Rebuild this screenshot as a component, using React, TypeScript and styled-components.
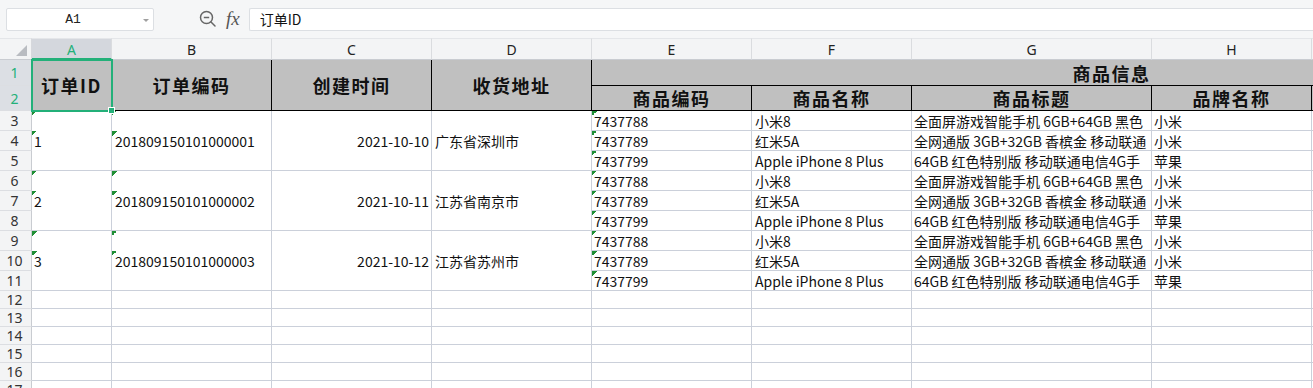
import React from 'react';
import styled, { createGlobalStyle, css } from 'styled-components';

const GREEN = '#23b079';
const GRID = '#cbd0da';
const MARK = '#1f8f35';
const CJK = '"Noto Sans CJK SC", "Noto Sans", sans-serif';

const GlobalStyle = createGlobalStyle`
  html, body { margin: 0; padding: 0; background: #fff; overflow: hidden; }
  body { font-family: ${CJK}; }
`;

const Page = styled.div`
  width: 1313px;
  height: 388px;
  overflow: hidden;
  background: #fff;
`;

const Toolbar = styled.div`
  height: 38px;
  box-sizing: border-box;
  display: flex;
  align-items: center;
  padding-left: 6px;
  background: #f5f6f7;
`;

const NameBox = styled.div`
  position: relative;
  width: 148px;
  height: 23px;
  box-sizing: border-box;
  border: 1px solid #dcdfe3;
  border-radius: 2px;
  background: #fff;
  display: flex;
  align-items: center;
  justify-content: center;
  padding-right: 14px;
  font: 13px "Liberation Mono", monospace;
  color: #222;
`;

const Caret = styled.span`
  position: absolute;
  right: 4px;
  top: 10px;
  width: 0;
  height: 0;
  border-top: 3px solid #a0a0a0;
  border-left: 3px solid transparent;
  border-right: 3px solid transparent;
`;

const IconSlot = styled.span`
  display: flex;
  align-items: center;
  margin-left: 45px;
  color: #666;
`;

const Fx = styled.span`
  margin-left: 9px;
  font: italic 19px "Liberation Serif", serif;
  color: #555;
  line-height: 1;
  padding-bottom: 2px;
`;

const Formula = styled.div`
  flex: 1;
  height: 23px;
  margin-left: 9px;
  box-sizing: border-box;
  border: 1px solid #dcdfe3;
  border-right: none;
  border-radius: 2px 0 0 2px;
  background: #fff;
  display: flex;
  align-items: center;
  padding-left: 10px;
  font-size: 14px;
  color: #111;
`;

const Sheet = styled.div`
  display: grid;
  grid-template-columns: 32px 80px repeat(5, 160px) 240px repeat(3, 160px);
  grid-template-rows: 22px 26px 25px repeat(9, 20px) repeat(6, 18px);
  width: max-content;
`;

type Place = { $c: number; $r: number; $cs?: number; $rs?: number };

const placed = css<Place>`
  grid-column: ${p => `${p.$c} / span ${p.$cs ?? 1}`};
  grid-row: ${p => `${p.$r} / span ${p.$rs ?? 1}`};
  box-sizing: border-box;
  min-width: 0;
`;

const Corner = styled.div`
  grid-column: 1;
  grid-row: 1;
  box-sizing: border-box;
  background: #f3f4f5;
  border-top: 1px solid #e4e6e9;
  border-right: 1px solid #d6d8dc;
  border-bottom: 1px solid #c9ccd1;
  display: flex;
  align-items: flex-end;
  justify-content: flex-end;
  padding: 0 4px 3px 0;
`;

const ColHead = styled.div<Place & { $active?: boolean }>`
  ${placed};
  background: ${p => (p.$active ? '#d4d7dd' : '#f3f4f5')};
  border-top: 1px solid #e4e6e9;
  border-right: 1px solid #dadcdf;
  border-bottom: ${p => (p.$active ? `2px solid ${GREEN}` : '1px solid #c9ccd1')};
  display: flex;
  align-items: center;
  justify-content: center;
  font: 14px "Noto Sans", sans-serif;
  color: ${p => (p.$active ? GREEN : '#222')};
  padding-top: 1px;
`;

const RowHead = styled.div<Place & { $active?: boolean }>`
  ${placed};
  background: ${p => (p.$active ? '#dcdfe4' : '#f3f4f5')};
  border-right: 1px solid #c9ccd1;
  border-bottom: 1px solid #dcdee2;
  display: flex;
  align-items: center;
  justify-content: center;
  padding-right: 2px;
  font: 14px "Noto Sans", sans-serif;
  color: ${p => (p.$active ? GREEN : '#333')};
`;

const HeadCell = styled.div<Place & { $selected?: boolean }>`
  ${placed};
  position: relative;
  background: #c0c0c0;
  border-right: 1px solid #000;
  border-bottom: 1px solid #000;
  display: flex;
  align-items: center;
  justify-content: center;
  font-family: ${CJK};
  font-weight: 700;
  font-size: 18px;
  letter-spacing: 1.5px;
  color: #111;
  white-space: nowrap;
  ${p =>
    p.$selected &&
    css`
      z-index: 2;
      outline: 2px solid ${GREEN};
      outline-offset: -1px;
      &::after {
        content: '';
        position: absolute;
        right: -4px;
        bottom: -4px;
        width: 5px;
        height: 5px;
        background: ${GREEN};
        border: 1px solid #fff;
      }
    `}
`;

const markBg = (offsets: number[]) =>
  offsets
    .map(o => `linear-gradient(135deg, ${MARK} 50%, transparent 50%) 0 ${o}px / 5px 5px no-repeat`)
    .join(', ');

const Cell = styled.div<Place & { $align?: 'left' | 'right'; $marks?: number[]; $pad?: number }>`
  ${placed};
  border-right: 1px solid ${GRID};
  border-bottom: 1px solid ${GRID};
  display: flex;
  align-items: center;
  justify-content: ${p => (p.$align === 'right' ? 'flex-end' : 'flex-start')};
  padding: 0 ${p => p.$pad ?? 2}px;
  overflow: hidden;
  white-space: nowrap;
  font-family: ${CJK};
  font-size: 14px;
  line-height: 1;
  color: #111;
  ${p => p.$marks && css`background: ${markBg(p.$marks)};`}
`;

const LETTERS = 'ABCDEFGHIJ'.split('');

const orders = [
  { id: '1', code: '201809150101000001', date: '2021-10-10', addr: '广东省深圳市' },
  { id: '2', code: '201809150101000002', date: '2021-10-11', addr: '江苏省南京市' },
  { id: '3', code: '201809150101000003', date: '2021-10-12', addr: '江苏省苏州市' },
];

const items = [
  ['7437788', '小米8', '全面屏游戏智能手机 6GB+64GB 黑色', '小米'],
  ['7437789', '红米5A', '全网通版 3GB+32GB 香槟金 移动联通', '小米'],
  ['7437799', 'Apple iPhone 8 Plus', '64GB 红色特别版 移动联通电信4G手', '苹果'],
];

const ZoomOutIcon = () => (
  <svg width="18" height="18" viewBox="0 0 18 18" fill="none" stroke="#666" strokeWidth="1.5">
    <circle cx="7.5" cy="7.5" r="6" />
    <line x1="4.8" y1="7.5" x2="10.2" y2="7.5" />
    <line x1="12" y1="12" x2="16" y2="16" strokeLinecap="round" />
  </svg>
);

const CornerMark = () => (
  <svg width="11" height="11" viewBox="0 0 11 11">
    <polygon points="11,0 11,11 0,11" fill="#b9bcc1" />
  </svg>
);

export default function App() {
  const rowHeads = Array.from({ length: 17 }, (_, i) => i + 1);
  const cells: React.ReactNode[] = [];

  orders.forEach((o, g) => {
    const r = 3 + g * 3;
    const gr = r + 1;
    cells.push(
      <Cell key={`a${g}`} $c={2} $r={gr} $rs={3} $marks={[0, 20]}>{o.id}</Cell>,
      <Cell key={`b${g}`} $c={3} $r={gr} $rs={3} $marks={[0, 20]} $pad={3}>{o.code}</Cell>,
      <Cell key={`c${g}`} $c={4} $r={gr} $rs={3} $align="right">{o.date}</Cell>,
      <Cell key={`d${g}`} $c={5} $r={gr} $rs={3} $pad={3}>{o.addr}</Cell>,
    );
    items.forEach((it, k) => {
      const rr = gr + k;
      cells.push(
        <Cell key={`e${g}${k}`} $c={6} $r={rr} $marks={[0]}>{it[0]}</Cell>,
        <Cell key={`f${g}${k}`} $c={7} $r={rr} $pad={3}>{it[1]}</Cell>,
        <Cell key={`g${g}${k}`} $c={8} $r={rr} $pad={2}>{it[2]}</Cell>,
        <Cell key={`h${g}${k}`} $c={9} $r={rr}>{it[3]}</Cell>,
        <Cell key={`i${g}${k}`} $c={10} $r={rr} />,
        <Cell key={`j${g}${k}`} $c={11} $r={rr} />,
      );
    });
  });

  for (let r = 12; r <= 17; r++) {
    LETTERS.forEach((_, i) => {
      cells.push(<Cell key={`x${r}${i}`} $c={i + 2} $r={r + 1} />);
    });
  }

  return (
    <Page>
      <GlobalStyle />
      <Toolbar>
        <NameBox>
          A1
          <Caret />
        </NameBox>
        <IconSlot>
          <ZoomOutIcon />
        </IconSlot>
        <Fx>fx</Fx>
        <Formula>订单ID</Formula>
      </Toolbar>
      <Sheet>
        <Corner>
          <CornerMark />
        </Corner>
        {LETTERS.map((l, i) => (
          <ColHead key={l} $c={i + 2} $r={1} $active={i === 0}>
            {l}
          </ColHead>
        ))}
        {rowHeads.map(n => (
          <RowHead key={n} $c={1} $r={n + 1} $active={n <= 2}>
            {n}
          </RowHead>
        ))}

        <HeadCell $c={2} $r={2} $rs={2} $selected>订单ID</HeadCell>
        <HeadCell $c={3} $r={2} $rs={2}>订单编码</HeadCell>
        <HeadCell $c={4} $r={2} $rs={2}>创建时间</HeadCell>
        <HeadCell $c={5} $r={2} $rs={2}>收货地址</HeadCell>
        <HeadCell $c={6} $r={2} $cs={6}>商品信息</HeadCell>
        <HeadCell $c={6} $r={3}>商品编码</HeadCell>
        <HeadCell $c={7} $r={3}>商品名称</HeadCell>
        <HeadCell $c={8} $r={3}>商品标题</HeadCell>
        <HeadCell $c={9} $r={3}>品牌名称</HeadCell>
        <HeadCell $c={10} $r={3} />
        <HeadCell $c={11} $r={3} />

        {cells}
      </Sheet>
    </Page>
  );
}
